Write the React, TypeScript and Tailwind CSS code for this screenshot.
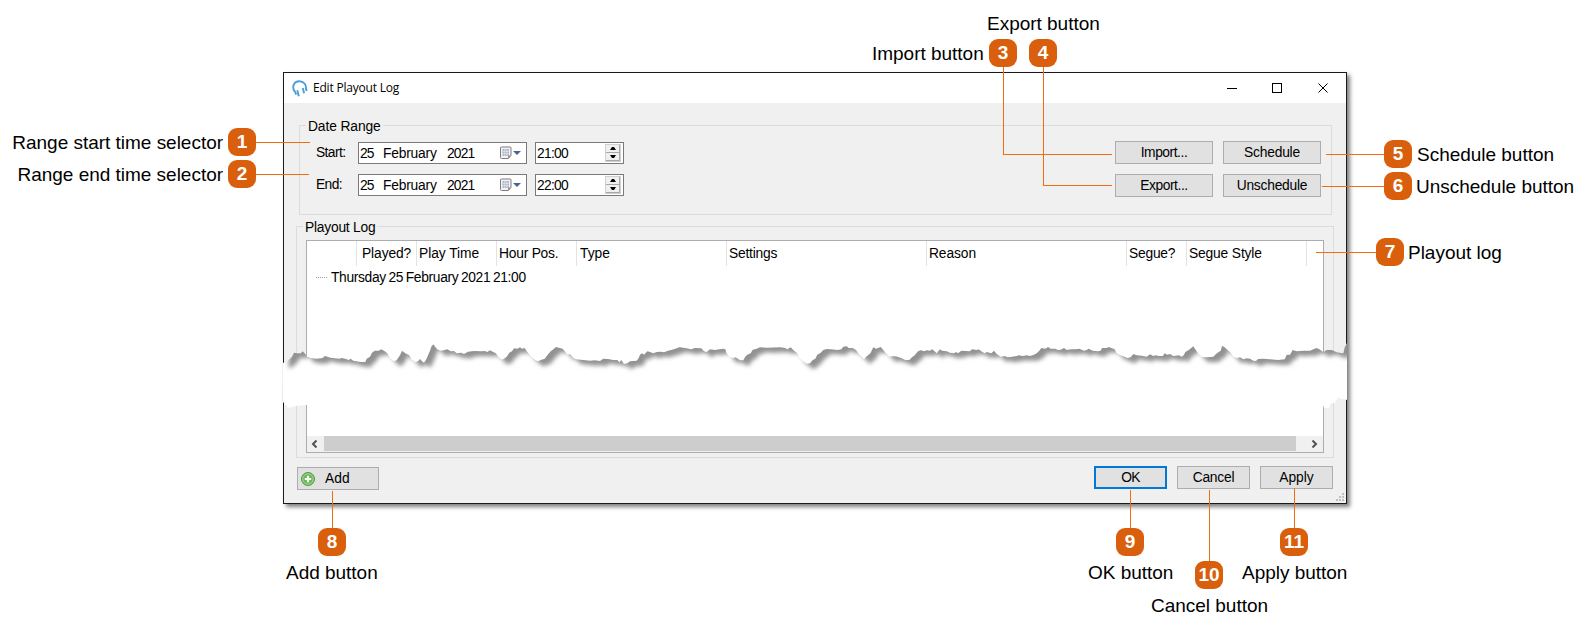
import React from 'react';

// Jagged upper edge of the torn strip, in thirds of a pixel from (270, 210)
const TEAR_SEGMENTS: { offset: number; points: string }[] = [
  {
    offset: 0,
    points:
      '38,458 46,458 58,448 66,440 72,428 82,430 92,430 98,424 106,432 112,440 122,444 140,446 158,444 164,438 172,440 182,443 208,446 216,444 228,447 236,450 242,446 250,452 272,456 286,456 290,446 300,440 306,428 314,422 326,422 334,418 344,424 352,430 358,442 372,454 380,450 390,436 396,422 406,430 418,436 424,448 436,456 444,454 450,447 456,454 462,458 468,450 474,436 480,422 484,410 490,403 496,411 502,418 512,422 524,420 532,418 542,424 552,423 560,430 574,428 582,432 594,425 612,423 634,424 644,423 652,426 660,421 668,425 678,430 684,440 694,448 700,448 710,440 718,428 726,424 732,415 742,416 750,412 756,416 764,414 772,426 784,440 796,450 804,454 812,450 824,446 832,436 842,424 850,418 858,411 866,413 878,416 884,424 892,434 900,432 910,444 918,448 940,450 960,452 974,451 990,453 1000,446 1014,447 1030,450 1042,450 1048,457 1054,450 1062,462 1072,460 1080,454 1100,452 1106,444 1110,434 1116,430 1122,434 1132,424 1140,426 1150,430 1160,426 1174,425 1182,427 1194,422 1206,419 1216,416 1228,412',
  },
  {
    offset: 1230,
    points:
      '0,412 20,415 34,418 44,414 64,415 72,424 80,426 90,418 104,420 118,418 130,416 136,418 140,430 148,440 160,444 166,442 174,446 180,451 190,451 196,440 202,434 212,430 218,419 230,416 240,412 262,413 300,412 316,414 322,418 332,412 340,420 352,430 356,442 370,454 380,461 390,460 398,450 406,446 412,434 422,428 430,420 440,417 452,418 474,420 484,418 490,410 500,409 506,414 518,414 528,420 536,432 546,440 552,448 558,440 566,434 572,428 580,412 588,416 602,411 610,420 618,430 628,440 640,438 652,440 664,444 676,450 688,450 696,442 704,436 714,424 722,421 732,424 740,421 750,422 756,418 762,422 770,430 780,418 786,422 800,424 810,428 822,430 828,426 834,430 844,422 856,423 870,424 876,418 890,420 896,418 904,424 914,430 920,426 934,430 942,422 950,432 962,440 974,438 984,442 996,440 1010,438 1016,436 1028,438 1040,436',
  },
  {
    offset: 2280,
    points:
      '0,438 12,434 20,430 28,422 34,414 46,416 54,411 62,416 76,416 84,420 92,419 102,414 110,420 122,418 138,418 148,416 162,422 170,420 176,416 188,422 204,424 212,422 216,414 230,414 236,411 246,415 254,418 260,430 272,436 284,440 292,444 302,442 310,432 320,436 336,437 350,440 360,433 370,438 376,436 388,438 398,438 404,430 412,434 420,432 430,438 446,436 456,440 462,434 466,426 476,420 484,414 490,409 496,418 504,430 514,440 530,442 550,440 558,432 566,426 572,422 576,408 582,410 590,418 602,428 610,440 622,444 630,442 640,448 650,445 660,446 670,452 678,453 684,447 700,446 720,448 744,450 764,448 770,434 780,434 788,420 800,424 820,422 840,422 850,418 860,414 868,418 880,426 890,420 906,420 920,427 940,430 944,412 951,400',
  },
];

const tearEdge = TEAR_SEGMENTS.map(({ offset, points }) =>
  points
    .split(' ')
    .map((p) => {
      const [x, y] = p.split(',').map(Number);
      return `${((x + offset) / 3 + 270).toFixed(1)},${(y / 3 + 210).toFixed(1)}`;
    })
    .join(' ')
).join(' ');

const tearBottom =
  '1347,400 1344,399 1341,399 1339,397 1337,399 1335,403 1331,403 1329,408 1324,408 1323,405 306,405 296,406 291,407 288,408 286,405 283,402 282,401';

function TornStrip() {
  return (
    <svg className="absolute left-0 top-0 pointer-events-none" width="1590" height="632" viewBox="0 0 1590 632">
      <defs>
        <clipPath id="strip">
          <polygon points={`${tearEdge} ${tearBottom}`} />
        </clipPath>
        <filter id="soft" x="-5%" y="-50%" width="110%" height="200%">
          <feGaussianBlur stdDeviation="2.1" />
        </filter>
      </defs>
      <g clipPath="url(#strip)">
        <rect x="280" y="330" width="1070" height="85" fill="#fff" />
        <polygon
          points={`${tearEdge} 1347,300 283,300`}
          transform="translate(6 5)"
          fill="#929292"
          filter="url(#soft)"
        />
        <rect x="282" y="363" width="1" height="38" fill="#e8e8e8" />
      </g>
    </svg>
  );
}

interface CalloutProps {
  n: number;
  badge: string;
  label: string;
  text: string;
  lines: string[];
}

const callouts: CalloutProps[] = [
  { n: 1, badge: 'left-[228px] top-[128px]', label: 'right-[1367px] top-[128px]', text: 'Range start time selector', lines: ['left-[256px] top-[142px] w-[54px] h-px'] },
  { n: 2, badge: 'left-[228px] top-[160px]', label: 'right-[1367px] top-[160px]', text: 'Range end time selector', lines: ['left-[256px] top-[174px] w-[53px] h-px'] },
  { n: 3, badge: 'left-[989px] top-[39px]', label: 'left-[872px] top-[39px]', text: 'Import button', lines: ['left-[1003px] top-[67px] w-px h-[88px]', 'left-[1003px] top-[154px] w-[109px] h-px'] },
  { n: 4, badge: 'left-[1029px] top-[39px]', label: 'left-[987px] top-[9px]', text: 'Export button', lines: ['left-[1043px] top-[67px] w-px h-[119px]', 'left-[1043px] top-[185px] w-[69px] h-px'] },
  { n: 5, badge: 'left-[1384px] top-[140px]', label: 'left-[1417px] top-[140px]', text: 'Schedule button', lines: ['left-[1326px] top-[154px] w-[58px] h-px'] },
  { n: 6, badge: 'left-[1384px] top-[172px]', label: 'left-[1416px] top-[172px]', text: 'Unschedule button', lines: ['left-[1322px] top-[186px] w-[62px] h-px'] },
  { n: 7, badge: 'left-[1376px] top-[238px]', label: 'left-[1408px] top-[238px]', text: 'Playout log', lines: ['left-[1316px] top-[252px] w-[60px] h-px'] },
  { n: 8, badge: 'left-[318px] top-[528px]', label: 'left-[286px] top-[558px]', text: 'Add button', lines: ['left-[332px] top-[491px] w-px h-[37px]'] },
  { n: 9, badge: 'left-[1116px] top-[528px]', label: 'left-[1088px] top-[558px]', text: 'OK button', lines: ['left-[1130px] top-[490px] w-px h-[38px]'] },
  { n: 10, badge: 'left-[1195px] top-[561px]', label: 'left-[1151px] top-[591px]', text: 'Cancel button', lines: ['left-[1209px] top-[490px] w-px h-[71px]'] },
  { n: 11, badge: 'left-[1280px] top-[528px]', label: 'left-[1242px] top-[558px]', text: 'Apply button', lines: ['left-[1294px] top-[488px] w-px h-[40px]'] },
];

function Callout({ n, badge, label, text, lines }: CalloutProps) {
  return (
    <>
      {lines.map((line) => (
        <div key={line} className={`absolute bg-[#f36c12] ${line}`} />
      ))}
      <div className={`absolute flex h-7 w-7 items-center justify-center rounded-[9px] bg-[#d95f0c] text-[19px] font-bold text-white ${badge}`}>
        {n}
      </div>
      <div className={`absolute whitespace-nowrap text-[19px] leading-[30px] tracking-[-0.02px] text-black ${label}`}>{text}</div>
    </>
  );
}

function Button({ children, className = 'w-[73px] border-[#adadad] border' }: { children: React.ReactNode; className?: string }) {
  return (
    <button className={`flex h-[23px] items-center justify-center bg-[#e1e1e1] ${className}`}>
      {children}
    </button>
  );
}

function CalendarIcon() {
  return (
    <svg width="12" height="14" viewBox="0 0 12 14">
      <path d="M1.5 1h8.500q1 0 1 1v7.500L8.500 12.500h-7q-1 0-1-1V2q0-1 1-1z" fill="#f1f2f6" stroke="#867b7b" />
      <path d="M2.500 3h6.500v7h-6.500z" fill="#a9b6ca" />
      <path d="M2.500 5.300h6.500M2.500 7.700h6.500M4.700 3v7M6.900 3v7" stroke="#e6ebf3" strokeWidth=".7" />
      <path d="M8 12.500V9.500h3z" fill="#9a8f8f" />
    </svg>
  );
}

function Spinner() {
  return (
    <div className="flex h-[18px] w-[16px] flex-col border border-[#d0d0d0] bg-[#f0f0f0]">
      <div className="flex h-2 items-center justify-center border-r border-b border-[#a8a8a8]">
        <svg width="6" height="3" viewBox="0 0 6 3"><path d="M0 3L2 0h2l2 3z" /></svg>
      </div>
      <div className="flex h-2 items-center justify-center border-r border-b border-[#a8a8a8]">
        <svg width="6" height="3" viewBox="0 0 6 3"><path d="M0 0l2 3h2l2-3z" /></svg>
      </div>
    </div>
  );
}

function RangeRow({ label, time }: { label: string; time: string }) {
  return (
    <div className="flex h-[22px] items-center">
      <span className="ml-px w-[42px] tracking-[-0.6px]">{label}</span>
      <div className="flex h-[22px] w-[169px] items-center border border-[#7a7a7a] bg-white pl-px">
        <span className="w-[23px] pt-0.5 tracking-[-0.8px]">25</span>
        <span className="w-[64px] pt-0.5 tracking-[-0.2px]">February</span>
        <span className="w-[53px] pt-0.5 tracking-[-0.8px]">2021</span>
        <CalendarIcon />
        <svg className="ml-px" width="8" height="4" viewBox="0 0 8 4"><path d="M0 0h8L4 4z" fill="#4a6395" /></svg>
      </div>
      <div className="ml-2 flex h-[22px] w-[89px] items-center justify-between border border-[#7a7a7a] bg-white pl-px pr-0.5">
        <span className="pt-0.5 tracking-[-0.7px]">{time}</span>
        <Spinner />
      </div>
    </div>
  );
}

const columns = [
  { name: '', className: 'w-[50px]' },
  { name: 'Played?', className: 'w-[60px] pl-[5px] tracking-[-0.1px]' },
  { name: 'Play Time', className: 'w-[80px] pl-0.5 tracking-[-0.05px]' },
  { name: 'Hour Pos.', className: 'w-[80px] pl-0.5' },
  { name: 'Type', className: 'w-[150px] pl-[3px] tracking-[0px]' },
  { name: 'Settings', className: 'w-[200px] pl-0.5' },
  { name: 'Reason', className: 'w-[200px] pl-0.5 tracking-[-0.1px]' },
  { name: 'Segue?', className: 'w-[60px] pl-0.5' },
  { name: 'Segue Style', className: 'w-[120px] pl-0.5 tracking-[-0.15px]' },
];

export default function App() {
  return (
    <div className="relative h-[632px] w-[1590px] overflow-hidden bg-white pl-[283px] pt-[72px] font-['Liberation_Sans',Arial,sans-serif]">
      {/* Dialog window */}
      <div className="flex h-[432px] w-[1064px] flex-col border border-[#1a1a1a] bg-[#f0f0f0] text-[13.8px] leading-4 tracking-[-0.22px] text-black shadow-[3px_3px_4px_rgba(0,0,0,0.5)]">
        {/* Title bar */}
        <div className="flex h-[30px] shrink-0 items-center bg-white pl-2 pr-[17px]">
          <svg width="16" height="17" viewBox="0 0 16 17" fill="none" stroke="#4a9fd8">
            <path d="M2.600 11.500C-.3 7 1.800 1.300 7.300 1.300c4.800 0 7.400 3.900 6.700 8.200" strokeWidth="1.900" />
            <path d="M2.700 11l1.500 3.700M5.300 10.300l1.500 6M10.800 8l1.300 5.300M13.700 7.500l1 3.600" strokeWidth="1.900" />
          </svg>
          <span className="ml-[5px] flex-1 font-['Open_Sans','Noto_Sans',sans-serif] text-[12px] tracking-[-0.2px]">Edit Playout Log</span>
          <svg width="102" height="10" viewBox="0 0 102 10" fill="none" stroke="#000" shapeRendering="crispEdges">
            <path d="M0 5.500h10M45.500 .5h9v9h-9z" />
            <path d="M91.500 .5l9 9M100.500 .5l-9 9" shapeRendering="auto" />
          </svg>
        </div>

        {/* Date range */}
        <fieldset className="relative ml-[15px] mt-[22px] flex h-[90px] w-[1033px] shrink-0 justify-between border border-[#dcdcdc] pl-[15px] pr-[10px]">
          <span className="absolute -top-[7px] left-[6px] bg-[#f0f0f0] px-0.5 tracking-[-0.1px]">Date Range</span>
          <div className="flex flex-col gap-[10px] pt-4">
            <RangeRow label="Start:" time="21:00" />
            <RangeRow label="End:" time="22:00" />
          </div>
          <div className="grid h-fit grid-cols-2 gap-[10px] pt-[15px]">
            <Button className="w-[98px] border border-[#adadad] tracking-[-0.45px]">Import...</Button>
            <Button className="w-[98px] border border-[#adadad]">Schedule</Button>
            <Button className="w-[98px] border border-[#adadad] tracking-[-0.45px]">Export...</Button>
            <Button className="w-[98px] border border-[#adadad]">Unschedule</Button>
          </div>
        </fieldset>

        {/* Playout log */}
        <fieldset className="relative ml-3 mt-[11px] h-[232px] w-[1038px] shrink-0 border border-[#dcdcdc] pl-[9px] pt-[13px]">
          <span className="absolute -top-[7px] left-[6px] bg-[#f0f0f0] px-0.5">Playout Log</span>
          <div className="flex h-[213px] w-[1018px] flex-col border border-[#adadad] bg-white">
            <div className="flex h-[25px]">
              {columns.map((col) => (
                <div key={col.name} className={`flex items-center whitespace-nowrap border-r border-[#e3e3e3] ${col.className}`}>
                  {col.name}
                </div>
              ))}
            </div>
            <div className="flex flex-1 items-start pl-[9px] pt-1">
              <span className="mr-1 mt-[7px] w-[11px] border-t border-dotted border-[#a0a0a0]" />
              <span className="tracking-[-0.33px] [word-spacing:-0.9px]">Thursday 25 February 2021 21:00</span>
            </div>
            <div className="flex h-[16px] shrink-0 items-center bg-[#f0f0f0]">
              <svg className="ml-1 mr-[6px]" width="7" height="8" viewBox="0 0 7 8" fill="none" stroke="#505050" strokeWidth="2"><path d="M5.500.5L2 4l3.500 3.500" /></svg>
              <div className="mb-px h-[15px] w-[972px] bg-[#cdcdcd]" />
              <svg className="ml-[15px]" width="7" height="8" viewBox="0 0 7 8" fill="none" stroke="#505050" strokeWidth="2"><path d="M1.500.5L5 4 1.500 7.500" /></svg>
            </div>
          </div>
        </fieldset>

        {/* Footer */}
        <div className="relative flex items-start justify-between px-[13px] pt-2">
          <button className="mt-px flex h-[23px] w-[82px] items-center border border-[#adadad] bg-[#e1e1e1] pl-[3px]">
            <svg width="14" height="14" viewBox="0 0 14 14">
              <circle cx="7" cy="7" r="6.500" fill="#6cb856" stroke="#4b9a41" />
              <circle cx="7" cy="7" r="5.300" fill="none" stroke="#b4dfa4" strokeWidth=".8" />
              <path d="M7 3.800v6.400M3.800 7h6.400" stroke="#fff" strokeWidth="2.200" />
            </svg>
            <span className="ml-[10px] tracking-[0.1px]">Add</span>
          </button>
          <div className="flex gap-[10px]">
            <Button className="w-[73px] border-2 border-[#0078d7] tracking-[-0.8px]">OK</Button>
            <Button>Cancel</Button>
            <Button className="w-[73px] border border-[#adadad] tracking-[0px]">Apply</Button>
          </div>
          <svg className="absolute right-[2px] top-[35px]" width="8" height="8" viewBox="0 0 8 8" fill="#bfbfbf" shapeRendering="crispEdges">
            <path d="M6 0h2v2H6zM3 3h2v2H3zM6 3h2v2H6zM0 6h2v2H0zM3 6h2v2H3zM6 6h2v2H6z" />
          </svg>
        </div>
      </div>

      <TornStrip />

      {callouts.map((c) => (
        <Callout key={c.n} {...c} />
      ))}
    </div>
  );
}
